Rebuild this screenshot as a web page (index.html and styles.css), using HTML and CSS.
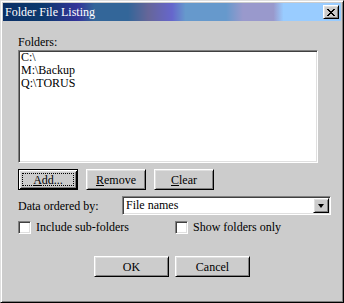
FILE: index.html
```html
<!DOCTYPE html>
<html>

<head>
	<meta charset="utf-8">
	<title>Folder File Listing</title>
	<link rel="stylesheet" href="styles.css">
</head>

<body>
	<div class="window">
		<div class="titlebar">
			<span class="title">Folder File Listing</span>
			<button class="close-btn">
				<svg width="8" height="7" viewBox="0 0 8 7" shape-rendering="crispEdges">
					<path fill="#000" d="M0 0h2v1H0z M6 0h2v1H6z M1 1h2v1H1z M5 1h2v1H5z M2 2h4v1H2z M3 3h2v1H3z M2 4h4v1H2z M1 5h2v1H1z M5 5h2v1H5z M0 6h2v1H0z M6 6h2v1H6z" />
				</svg>
			</button>
		</div>

		<div class="content">
			<div class="label">Folders:</div>
			<div class="listbox">
				<div class="item">C:\</div>
				<div class="item">M:\Backup</div>
				<div class="item">Q:\TORUS</div>
			</div>

			<div class="btn-row">
				<button class="btn default"><span class="focus"><u>A</u>dd...</span></button>
				<button class="btn"><u>R</u>emove</button>
				<button class="btn"><u>C</u>lear</button>
			</div>

			<div class="order-row">
				<span class="order-label">Data ordered by:</span>
				<div class="combo">
					<span class="combo-text">File names</span>
					<span class="combo-btn"><span class="arrow"></span></span>
				</div>
			</div>

			<div class="check-row">
				<label class="check"><span class="box"></span>Include sub-folders</label>
				<label class="check"><span class="box"></span>Show folders only</label>
			</div>

			<div class="dialog-buttons">
				<button class="btn wide">OK</button>
				<button class="btn wide">Cancel</button>
			</div>
		</div>
	</div>
</body>

</html>
```

FILE: styles.css
```css
:root {
	--face: #cccccc;
	--light: #dfdfdf;
	--shadow: #808080;
	--dark: #404040;
}

body {
	margin: 0;
	font: 12px/14px 'Liberation Serif', serif;
	color: #000;
	background: var(--face);
}

.window {
	width: 344px;
	height: 303px;
	box-sizing: border-box;
	background: var(--face);
	border: 1px solid;
	border-color: var(--light) #000 #000 var(--light);
	box-shadow: inset 1px 1px #fff, inset -1px -1px var(--shadow);
	padding: 2px;
}

.titlebar {
	height: 18px;
	display: flex;
	align-items: center;
	justify-content: space-between;
	padding: 0 2px;
	background: linear-gradient(90deg,
			#0a2f66 0%,
			#0c3a6e 12%,
			#333399 22%,
			#336699 27%,
			#336699 37%,
			#666699 43%,
			#6666cc 50%,
			#6699cc 54%,
			#6699cc 66%,
			#9999cc 71%,
			#9999cc 80%,
			#99ccff 83%,
			#99ccff 100%);
}

.title {
	color: #fff;
	line-height: 18px;
}

button {
	font: inherit;
	color: #000;
	margin: 0;
	padding: 0;
	background: var(--face);
	cursor: pointer;
}

.close-btn,
.btn,
.combo-btn {
	border: 1px solid;
	border-color: #fff #000 #000 #fff;
	box-shadow: inset 1px 1px var(--light), inset -1px -1px var(--shadow);
	box-sizing: border-box;
	display: flex;
	align-items: center;
	justify-content: center;
}

.close-btn {
	width: 16px;
	height: 14px;
}

.content {
	padding: 14px 0 0 15px;
}

.label {
	margin-bottom: 1px;
}

.listbox {
	width: 300px;
	height: 113px;
	box-sizing: border-box;
	background: #fff;
	border: 1px solid;
	border-color: var(--shadow) #fff #fff var(--shadow);
	box-shadow: inset 1px 1px var(--dark), inset -1px -1px var(--light);
	padding: 0 2px;
	line-height: 13px;
}

.btn-row {
	display: flex;
	gap: 8px;
	margin-top: 6px;
}

.btn {
	width: 60px;
	height: 21px;
}

.btn.default {
	border: 1px solid #000;
	box-shadow: inset 1px 1px #fff, inset -1px -1px #000, inset 2px 2px var(--light), inset -2px -2px var(--shadow);
	padding: 2px;
}

.focus {
	flex: 1;
	align-self: stretch;
	display: flex;
	align-items: center;
	justify-content: center;
	border: 1px dotted #000;
	margin: 1px;
}

.order-row {
	display: flex;
	align-items: center;
	margin-top: 6px;
}

.order-label {
	width: 104px;
}

.combo {
	width: 209px;
	height: 19px;
	box-sizing: border-box;
	display: flex;
	align-items: center;
	background: #fff;
	border: 1px solid;
	border-color: var(--shadow) #fff #fff var(--shadow);
	box-shadow: inset 1px 1px var(--dark), inset -1px -1px var(--light);
	padding: 1px;
}

.combo-text {
	flex: 1;
	padding-left: 2px;
	line-height: 15px;
}

.combo-btn {
	width: 16px;
	height: 15px;
	background: var(--face);
}

.arrow {
	width: 0;
	height: 0;
	border-left: 3.5px solid transparent;
	border-right: 3.5px solid transparent;
	border-top: 4px solid #000;
	margin-top: 1px;
}

.check-row {
	display: grid;
	grid-template-columns: 157px auto;
	margin-top: 6px;
}

.check {
	display: flex;
	align-items: center;
	gap: 5px;
	height: 13px;
	line-height: 13px;
}

.box {
	width: 13px;
	height: 13px;
	box-sizing: border-box;
	background: #fff;
	border: 1px solid;
	border-color: var(--shadow) #fff #fff var(--shadow);
	box-shadow: inset 1px 1px var(--dark), inset -1px -1px var(--light);
}

.dialog-buttons {
	display: flex;
	justify-content: center;
	gap: 6px;
	margin-top: 22px;
	padding-right: 15px;
}

.btn.wide {
	width: 75px;
}
```
